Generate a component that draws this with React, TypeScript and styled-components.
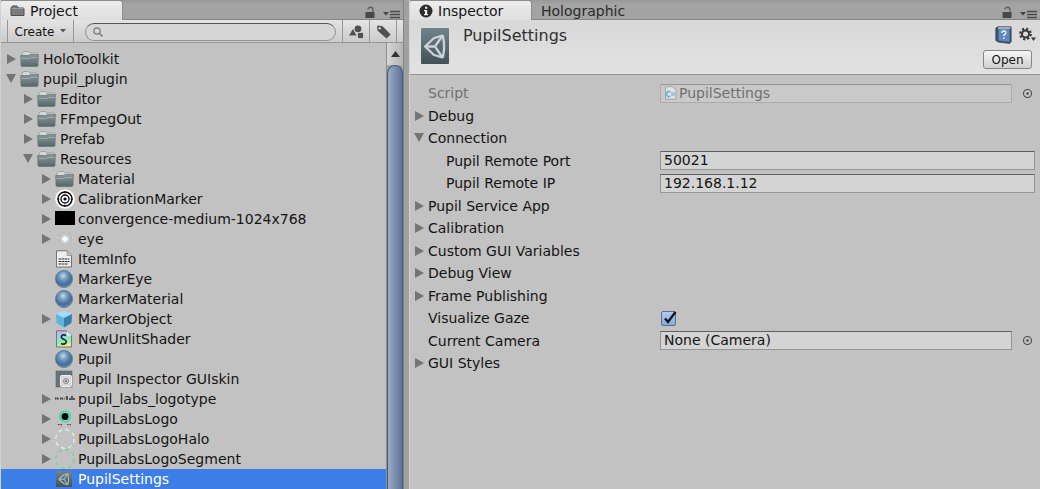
import React, { useId, useState } from "react";
import styled, { createGlobalStyle, css } from "styled-components";

const GlobalStyle = createGlobalStyle`
  *, *::before, *::after { box-sizing: border-box; }
  body {
    margin: 0;
    background: #c2c2c2;
    color: #141414;
    font-family: "DejaVu Sans", Verdana, sans-serif;
    font-size: 14px;
    line-height: 20px;
  }
  button, input { font: inherit; color: inherit; }
  svg { display: block; flex: none; }
`;

/* ---------- window frame ---------- */

const Editor = styled.main`
  display: flex;
  min-height: 100vh;
  background: #a0a0a0;
`;

const ProjectPanel = styled.section`
  flex: 0 0 404px;
  display: flex;
  flex-direction: column;
  background: #c2c2c2;
  border-left: 1px solid #d0d0d0;
  border-right: 1px solid #848484;
`;

const InspectorPanel = styled.section`
  flex: 1;
  min-width: 0;
  margin-left: 5px;
  display: flex;
  flex-direction: column;
  background: #c2c2c2;
  border-left: 1px solid #d4d4d4;
`;

const TabBar = styled.div`
  display: flex;
  height: 20px;
  padding-right: 3px;
  background: linear-gradient(#989898, #a4a4a4 4px, #a2a2a2);
  border-bottom: 1px solid #868686;
`;

const Tab = styled.button<{ $active?: boolean; $width: number }>`
  display: flex;
  align-items: center;
  gap: 5px;
  width: ${(p) => p.$width}px;
  height: 20px;
  padding: 0 0 0 9px;
  border: 0;
  border-top: 1px solid transparent;
  background: none;
  color: #2a2a2a;
  text-align: left;
  white-space: nowrap;
  ${(p) =>
    p.$active &&
    css`
      color: #141414;
      background: linear-gradient(#ededed, #dedede);
      border-top-color: #8c8c8c;
      border-right: 1px solid #8c8c8c;
      border-radius: 2px 3px 0 0;
    `}
`;

const TabTools = styled.div`
  display: flex;
  gap: 8px;
  align-items: flex-end;
  margin-left: auto;
`;

const PlainButton = styled.button`
  display: flex;
  padding: 0;
  border: 0;
  background: none;
`;

/* ---------- project panel ---------- */

const Toolbar = styled.div`
  display: flex;
  align-items: stretch;
  height: 23px;
  padding: 0 6px;
  background: linear-gradient(#e4e4e4, #cbcbcb);
  border-bottom: 1px solid #979797;
`;

const ToolButton = styled.button<{ $width: number }>`
  display: flex;
  align-items: center;
  justify-content: center;
  gap: 6px;
  width: ${(p) => p.$width}px;
  padding: 2px 0 0;
  border: 0;
  border-right: 1px solid #979797;
  background: none;
  font-size: 12px;
  &:first-of-type { border-left: 1px solid #979797; }
`;

const Search = styled.label`
  flex: 1;
  display: flex;
  align-items: center;
  gap: 4px;
  min-width: 0;
  height: 18px;
  margin: 3px 6px 1px 11px;
  padding: 0 7px;
  background: #d6d6d6;
  border: 1px solid #959595;
  border-top-color: #555;
  border-radius: 9px;
`;

const SearchInput = styled.input`
  flex: 1;
  min-width: 0;
  height: 14px;
  padding: 0;
  border: 0;
  outline: 0;
  background: none;
  font-size: 12px;
`;

const FilterGroup = styled.div`
  display: flex;
`;

const ProjectBody = styled.div`
  flex: 1;
  display: flex;
`;

const Tree = styled.ul`
  flex: 1;
  min-width: 0;
  margin: 0;
  padding: 6px 0 0;
  list-style: none;
`;

const INDENTS = [5, 22, 40];

const TreeRow = styled.li<{ $depth: number; $selected?: boolean }>`
  display: flex;
  align-items: center;
  height: 20px;
  padding-left: ${(p) => INDENTS[p.$depth]}px;
  white-space: nowrap;
  ${(p) => p.$selected && css`background: #3d7de6; color: #fff;`}
`;

const ArrowSlot = styled.span`
  flex: 0 0 14px;
`;

const IconSlot = styled.span`
  flex: 0 0 20px;
  display: flex;
  margin-right: 3px;
`;

const ScrollBar = styled.div`
  flex: 0 0 17px;
  display: flex;
  flex-direction: column;
  background: #a6a6a6;
  border-left: 1px solid #909090;
`;

const ScrollArrow = styled.button`
  display: flex;
  align-items: center;
  justify-content: center;
  height: 22px;
  padding: 0;
  border: 0;
  background: linear-gradient(90deg, #d6d6d6, #b4b4b4);
`;

const ScrollThumb = styled.div`
  flex: 1;
  background: linear-gradient(90deg, #9aabc6, #5f7499);
  border: 1px solid #475a7c;
  border-bottom: 0;
  border-radius: 8px 8px 0 0;
`;

/* ---------- inspector panel ---------- */

const AssetHeader = styled.header`
  display: flex;
  height: 55px;
  padding: 6px 4px 0 11px;
  background: linear-gradient(#d8d8d8, #e2e2e2);
  border-bottom: 1px solid #959595;
`;

const AssetIconFrame = styled.div`
  padding-top: 2px;
`;

const AssetTitle = styled.h1`
  flex: 1;
  margin: 0 0 0 14px;
  font-size: 16px;
  font-weight: 400;
  line-height: 20px;
  color: #303030;
`;

const HeaderActions = styled.div`
  display: flex;
  flex-direction: column;
  align-items: flex-end;
  gap: 6px;
`;

const ActionIcons = styled.div`
  display: flex;
  gap: 7px;
`;

const OpenButton = styled.button`
  width: 49px;
  height: 19px;
  margin-right: 4px;
  padding: 0;
  font-size: 12px;
  line-height: 16px;
  background: linear-gradient(#f6f6f6, #d0d0d0);
  border: 1px solid #858585;
  border-radius: 3px;
`;

const Properties = styled.form`
  padding: 7px 5px 8px 4px;
`;

const PropertyRow = styled.div`
  display: flex;
  align-items: center;
  height: 22px;
  &:nth-child(even) { height: 23px; }
`;

const Foldout = styled.button`
  display: flex;
  align-items: center;
  gap: 4px;
  padding: 0;
  border: 0;
  background: none;
  text-align: left;
  white-space: nowrap;
`;

const FieldLabel = styled.label<{ $nested?: boolean; $disabled?: boolean }>`
  flex: 0 0 246px;
  padding-left: ${(p) => (p.$nested ? 32 : 14)}px;
  white-space: nowrap;
  ${(p) => p.$disabled && css`color: #707070;`}
`;

const FieldBox = styled.div<{ $disabled?: boolean }>`
  flex: 1;
  display: flex;
  align-items: center;
  gap: 2px;
  min-width: 0;
  height: 19px;
  padding: 0 3px;
  background: ${(p) => (p.$disabled ? "#c9c9c9" : "#d4d4d4")};
  border: 1px solid ${(p) => (p.$disabled ? "#acacac" : "#969696")};
  border-top-color: ${(p) => (p.$disabled ? "#969696" : "#606060")};
`;

const FieldInput = styled.input`
  flex: 1;
  min-width: 0;
  height: 17px;
  padding: 0;
  border: 0;
  outline: 0;
  background: none;
  line-height: 17px;
  &:disabled { color: #707070; }
`;

const Picker = styled(PlainButton)`
  margin: 0 2px 0 10px;
`;

const TickBox = styled.span`
  display: grid;
  margin-left: 1px;
  > * { grid-area: 1 / 1; }
  svg { pointer-events: none; }
`;

const TickInput = styled.input`
  appearance: none;
  width: 15px;
  height: 15px;
  margin: 1px 0 0;
  background: linear-gradient(#b3cbee, #86aade);
  border: 1px solid #5d6f8c;
  border-radius: 2px;
  &:not(:checked) { background: #d8d8d8; }
  &:not(:checked) + svg { visibility: hidden; }
`;

/* ---------- icons ---------- */

const Triangle = ({ open }: { open?: boolean }) => (
  <svg width="10" height="12" viewBox="0 0 10 12" fill="#747474">
    {open ? <path d="M0 1h10L5 10z" /> : <path d="M1 1v10l9-5z" />}
  </svg>
);

const LockIcon = () => (
  <svg width="10" height="13" viewBox="0 0 10 13">
    <path d="M3 3.5c0-3 5-3 5 0V7" fill="none" stroke="#606060" strokeWidth="1.3" />
    <rect x="0.5" y="6" width="9" height="6" fill="#484848" />
  </svg>
);

const MenuIcon = () => (
  <svg width="17" height="10" viewBox="0 0 17 10">
    <path d="M0 3h6L3 6.500z" fill="#444" />
    <path d="M7 2.500h10M7 5.500h10M7 8.500h10" stroke="#4c4c4c" strokeWidth="1.300" />
  </svg>
);

const TabFolderIcon = () => (
  <svg width="15" height="12" viewBox="0 0 15 12">
    <path d="M1 10.500V3l1.500-2h4.500l1 2h5.500l.5 1v6.500z" fill="#7c7c7c" stroke="#4d4d4d" />
    <path d="M1.500 3.500h12" stroke="#9c9c9c" />
  </svg>
);

const InfoIcon = () => (
  <svg width="14" height="14" viewBox="0 0 14 14">
    <circle cx="7" cy="7" r="6.5" fill="#2c2c2c" />
    <path d="M6 2.8h2.2v2H6zM5 6h3.2v4H9v1.2H5V10h1V7.2H5z" fill="#eee" />
  </svg>
);

const SearchIcon = () => (
  <svg width="10" height="10" viewBox="0 0 10 10" fill="none" stroke="#7c7c7c">
    <circle cx="4" cy="4" r="3.2" strokeWidth="1.2" />
    <path d="M6.3 6.3 9.5 9.5" strokeWidth="1.6" />
  </svg>
);

const ShapesIcon = () => (
  <svg width="15" height="14" viewBox="0 0 15 14" fill="#505050">
    <circle cx="9" cy="3.8" r="3.4" />
    <path d="M0 10.500 4 4l3.500 6.500z" />
    <rect x="8.5" y="7.6" width="6" height="6" stroke="#d8d8d8" strokeWidth="0.8" />
  </svg>
);

const TagIcon = () => (
  <svg width="15" height="14" viewBox="0 0 15 14">
    <path
      fillRule="evenodd"
      d="M1 1.8 2 .6l4.600.600 8 8.200-4 4.200L1.600 5.800zM3.600 2a1.200 1.200 0 1 0 .1 2.400A1.200 1.200 0 0 0 3.600 2z"
      fill="#505050"
    />
  </svg>
);

const FolderIcon = () => (
  <svg width="19" height="18" viewBox="0 0 19 18">
    <defs>
      <linearGradient id="folder" x1="0" y1="0" x2="0" y2="1">
        <stop offset="0" stopColor="#8a9799" />
        <stop offset="0.5" stopColor="#738184" />
        <stop offset="1" stopColor="#566567" />
      </linearGradient>
    </defs>
    <path d="M1.500 6 2.500 2.500 4 1.500h4.500l1.500 1.500h7l1 1V7z" fill="#d4d8d8" stroke="#8c9292" strokeWidth="0.700" />
    <path d="M.7 5.500h8l1.500-1h8.100L18 15.500l-.8 1H1.700l-.7-1z" fill="url(#folder)" stroke="#66757a" strokeWidth="0.700" />
    <path d="M1.500 8.500h8l1.500-1h6.500" fill="none" stroke="#9fb8bc" strokeWidth="0.800" />
  </svg>
);

const TargetIcon = () => (
  <svg width="20" height="20" viewBox="0 0 20 20">
    <circle cx="10" cy="10" r="9.800" fill="#fff" />
    <circle cx="10" cy="10" r="7" fill="none" stroke="#000" strokeWidth="1.400" />
    <circle cx="10" cy="10" r="4" fill="none" stroke="#000" strokeWidth="1.300" />
    <circle cx="10" cy="10" r="1.600" fill="#000" />
    <path d="M10 2v2.500M10 15.500V18M2 10h2.500M15.500 10H18" stroke="#000" strokeWidth="0.800" />
  </svg>
);

const BlackTextureIcon = () => (
  <svg width="20" height="16" viewBox="0 0 20 16">
    <rect y="0" width="20" height="14" fill="#000" />
  </svg>
);

const EyeIcon = () => (
  <svg width="20" height="18" viewBox="0 0 20 18">
    <circle cx="10" cy="9" r="6" fill="#cacaca" stroke="#b2b2b2" strokeDasharray="3 2" />
    <circle cx="10" cy="9" r="3" fill="#e6e6e6" />
    <path d="M10 6.500v5M7.500 9h5" stroke="#fff" strokeWidth="2" />
    <path d="M1 7.500h2M1 11h1M17 7h2M18 11h1" stroke="#d6d6d6" />
  </svg>
);

const TextFileIcon = () => (
  <svg width="18" height="18" viewBox="0 0 18 18">
    <path d="M1.500.8h10.500l4.500 4.500V17h-15z" fill="#efefef" stroke="#727272" />
    <path d="M12 1v4.500h4.500" fill="#c4c4c4" stroke="#8c8c8c" strokeWidth="0.700" />
    <path d="M3.500 9h11M3.500 11.500h11M3.500 14h9" stroke="#2c2c2c" strokeWidth="1.200" strokeDasharray="3 .5 2 .5" />
  </svg>
);

const SphereIcon = () => (
  <svg width="18" height="18" viewBox="0 0 18 18">
    <defs>
      <radialGradient id="sphere" cx="0.45" cy="0.32" r="0.7">
        <stop offset="0" stopColor="#c4dcec" />
        <stop offset="0.35" stopColor="#7299bd" />
        <stop offset="0.72" stopColor="#426c97" />
        <stop offset="1" stopColor="#6595be" />
      </radialGradient>
    </defs>
    <circle cx="9" cy="9" r="8.500" fill="url(#sphere)" stroke="#4c6c8c" strokeWidth="0.700" />
  </svg>
);

const CubeIcon = () => (
  <svg width="18" height="18" viewBox="0 0 18 18">
    <path d="M9 .8 17 4 9 8 1 4z" fill="#a4dbf4" />
    <path d="M1 4 9 8v9.500L1.500 13z" fill="#5cb4e2" />
    <path d="M17 4 9 8v9.500L16.500 13z" fill="#347fae" />
  </svg>
);

const ShaderIcon = () => (
  <svg width="18" height="18" viewBox="0 0 18 18">
    <defs>
      <linearGradient id="shader" x1="0.2" y1="0" x2="0.5" y2="1">
        <stop offset="0" stopColor="#d8a2ee" />
        <stop offset="0.35" stopColor="#9ed2f2" />
        <stop offset="0.65" stopColor="#8cecb0" />
        <stop offset="1" stopColor="#f2ea92" />
      </linearGradient>
    </defs>
    <path d="M1.500.8h10.500l4.500 4.500V17h-15z" fill="url(#shader)" stroke="#6f7a76" />
    <path d="M12 1v4.500h4.500" fill="#e4f2f8" />
    <path
      d="M11 5.500C9.500 4.400 6.300 4.600 6.300 7c0 2.600 5 1.900 5 4.700 0 2.200-3 3-5.300 1.700"
      fill="none"
      stroke="#1c2c2c"
      strokeWidth="1.700"
    />
  </svg>
);

const SkinIcon = () => (
  <svg width="18" height="18" viewBox="0 0 18 18">
    <rect x="1" y="1" width="16" height="16" fill="#66737a" stroke="#58646a" strokeWidth="0.600" />
    <rect x="5.500" y="5.500" width="11" height="11" rx="1" fill="#d8d8d8" stroke="#efefef" />
    <circle cx="11" cy="11" r="2.500" fill="#cfcfcf" stroke="#8a8a8a" />
    <circle cx="11" cy="11" r="0.900" fill="#555" />
  </svg>
);

const LogotypeIcon = () => (
  <svg width="20" height="16" viewBox="0 0 20 16">
    <path d="M0 7.500h4M5 7.500h3" stroke="#333" strokeWidth="1.800" strokeDasharray="1.500 .5" />
    <path d="M9 9l1.500-3" stroke="#777" />
    <path d="M12 5v4M14 8h2M17 5v4M18 8h2" stroke="#333" strokeWidth="1.500" />
  </svg>
);

const PupilLogoIcon = () => (
  <svg width="20" height="20" viewBox="0 0 20 20">
    <circle cx="10" cy="7.500" r="5.200" fill="#b0dcca" stroke="#43d9a4" strokeWidth="1.800" />
    <circle cx="10" cy="7.500" r="3.500" fill="#000" />
    <path d="M3 15.500h5M12 15.500h5" stroke="#444" strokeDasharray="1.500 1" />
    <path d="M4 17h3M13 17h4" stroke="#999" strokeDasharray="1 1" />
  </svg>
);

const RingIcon = ({ color }: { color: string }) => (
  <svg width="20" height="20" viewBox="0 0 20 20">
    <circle cx="10" cy="10" r="9.300" fill="none" stroke={color} strokeWidth="1.200" strokeDasharray="4 3.300" />
  </svg>
);

const UnityMark = () => (
  <g fill="none" strokeLinejoin="round" strokeLinecap="round">
    <path d="M4 18.500 13 10l8.500-2.300M4 18.500 13 27l8.500 2.300" />
    <path d="M22 8.500 23 15v7l-1 6.500" />
    <path d="M5 18.500h9M14 18.500 20.500 9M14 18.500 20.500 28" />
  </g>
);

const AssetIcon = ({ large }: { large?: boolean }) => (
  <svg width={large ? 28 : 18} height={large ? 36 : 18} viewBox={large ? "0 0 28 36" : "-4 2 36 32"}>
    <defs>
      <linearGradient id={large ? "assetLarge" : "assetSmall"} x1="0" y1="0" x2="0" y2="1">
        <stop offset="0" stopColor="#71848b" />
        <stop offset="1" stopColor="#425158" />
      </linearGradient>
    </defs>
    {large ? (
      <rect width="28" height="36" rx="1" fill="url(#assetLarge)" />
    ) : (
      <rect x="-2" y="2" width="32" height="32" fill="url(#assetSmall)" />
    )}
    <g stroke={large ? "#c9d3d7" : "#a9bac2"} strokeWidth="2.300">
      <UnityMark />
    </g>
  </svg>
);

const ScriptIcon = () => (
  <svg width="13" height="14" viewBox="0 0 13 14">
    <path d="M1.500.7h7l3.500 3.500v9H1.500z" fill="#dce2e6" stroke="#9ea6aa" />
    <path d="M6.500 6A2.500 2.500 0 1 0 6.500 10" fill="none" stroke="#69b0d2" strokeWidth="1.500" />
    <path d="M8 6v4M10 6v4M7 7h4M7 9h4" stroke="#69b0d2" strokeWidth="0.600" />
  </svg>
);

const HelpIcon = () => (
  <svg width="17" height="18" viewBox="0 0 17 18">
    <path d="M.8 2 3 .8h13.200v15L14.500 17.500 3 16 .8 14.500z" fill="#3d506e" stroke="#33435e" strokeWidth="0.700" />
    <path d="M3 2h12.500" stroke="#e4e8ee" strokeWidth="1.200" />
    <path d="M3.500 3h11v13l-11-1.500z" fill="#6288bd" />
    <path d="M6.800 7c.2-3 4.600-2.500 4 0-.4 1.200-2 1.200-2 3M8.800 11.500V13" fill="none" stroke="#f2f6fc" strokeWidth="1.400" />
  </svg>
);

const GearIcon = () => (
  <svg width="17" height="18" viewBox="0 0 17 18">
    <circle cx="6.500" cy="8" r="5.300" fill="none" stroke="#383838" strokeWidth="2.200" strokeDasharray="2.160 2" />
    <circle cx="6.500" cy="8" r="3.500" fill="none" stroke="#383838" strokeWidth="2" />
    <path d="M12 11.500h5L14.500 15z" fill="#383838" />
  </svg>
);

const PickerIcon = () => (
  <svg width="11" height="11" viewBox="0 0 11 11">
    <circle cx="5.500" cy="5.500" r="4" fill="none" stroke="#4a4a4a" strokeWidth="1.100" />
    <circle cx="5.500" cy="5.500" r="1.200" fill="#4a4a4a" />
  </svg>
);

const CheckMark = () => (
  <svg width="17" height="16" viewBox="0 0 17 16">
    <path d="M4 8.500 7 12 14.500 2" fill="none" stroke="#0a0f18" strokeWidth="2.300" />
  </svg>
);

/* ---------- data ---------- */

type Asset = { name: string; depth: number; icon: React.ReactNode; fold?: "open" | "closed"; selected?: boolean };

const ASSETS: Asset[] = [
  { name: "HoloToolkit", depth: 0, icon: <FolderIcon />, fold: "closed" },
  { name: "pupil_plugin", depth: 0, icon: <FolderIcon />, fold: "open" },
  { name: "Editor", depth: 1, icon: <FolderIcon />, fold: "closed" },
  { name: "FFmpegOut", depth: 1, icon: <FolderIcon />, fold: "closed" },
  { name: "Prefab", depth: 1, icon: <FolderIcon />, fold: "closed" },
  { name: "Resources", depth: 1, icon: <FolderIcon />, fold: "open" },
  { name: "Material", depth: 2, icon: <FolderIcon />, fold: "closed" },
  { name: "CalibrationMarker", depth: 2, icon: <TargetIcon />, fold: "closed" },
  { name: "convergence-medium-1024x768", depth: 2, icon: <BlackTextureIcon />, fold: "closed" },
  { name: "eye", depth: 2, icon: <EyeIcon />, fold: "closed" },
  { name: "ItemInfo", depth: 2, icon: <TextFileIcon /> },
  { name: "MarkerEye", depth: 2, icon: <SphereIcon /> },
  { name: "MarkerMaterial", depth: 2, icon: <SphereIcon /> },
  { name: "MarkerObject", depth: 2, icon: <CubeIcon />, fold: "closed" },
  { name: "NewUnlitShader", depth: 2, icon: <ShaderIcon /> },
  { name: "Pupil", depth: 2, icon: <SphereIcon /> },
  { name: "Pupil Inspector GUIskin", depth: 2, icon: <SkinIcon /> },
  { name: "pupil_labs_logotype", depth: 2, icon: <LogotypeIcon />, fold: "closed" },
  { name: "PupilLabsLogo", depth: 2, icon: <PupilLogoIcon />, fold: "closed" },
  { name: "PupilLabsLogoHalo", depth: 2, icon: <RingIcon color="#e6f0ec" />, fold: "closed" },
  { name: "PupilLabsLogoSegment", depth: 2, icon: <RingIcon color="#62d8a6" />, fold: "closed" },
  { name: "PupilSettings", depth: 2, icon: <AssetIcon />, selected: true },
];

/* ---------- pieces ---------- */

const WindowTools = () => (
  <TabTools>
    <PlainButton aria-label="Lock"><LockIcon /></PlainButton>
    <PlainButton aria-label="Panel menu"><MenuIcon /></PlainButton>
  </TabTools>
);

const Section = ({ title, open }: { title: string; open?: boolean }) => (
  <PropertyRow>
    <Foldout type="button" aria-expanded={!!open}>
      <Triangle open={open} />
      {title}
    </Foldout>
  </PropertyRow>
);

type FieldProps = {
  label: string;
  value: string;
  nested?: boolean;
  disabled?: boolean;
  picker?: boolean;
  icon?: React.ReactNode;
};

const Field = ({ label, value, nested, disabled, picker, icon }: FieldProps) => {
  const id = useId();
  return (
    <PropertyRow>
      <FieldLabel htmlFor={id} $nested={nested} $disabled={disabled}>{label}</FieldLabel>
      <FieldBox $disabled={disabled}>
        {icon}
        <FieldInput id={id} defaultValue={value} disabled={disabled} readOnly={picker} />
      </FieldBox>
      {picker && (
        <Picker type="button" aria-label={`Select ${label}`} disabled={disabled}>
          <PickerIcon />
        </Picker>
      )}
    </PropertyRow>
  );
};

const Toggle = ({ label }: { label: string }) => {
  const id = useId();
  const [on, setOn] = useState(true);
  return (
    <PropertyRow>
      <FieldLabel htmlFor={id}>{label}</FieldLabel>
      <TickBox>
        <TickInput id={id} type="checkbox" checked={on} onChange={(e) => setOn(e.target.checked)} />
        <CheckMark />
      </TickBox>
    </PropertyRow>
  );
};

export default function App() {
  return (
    <>
      <GlobalStyle />
      <Editor>
        <ProjectPanel aria-label="Project">
          <TabBar>
            <Tab $active $width={122}><TabFolderIcon />Project</Tab>
            <WindowTools />
          </TabBar>
          <Toolbar>
            <ToolButton $width={67}>
              Create
              <svg width="6" height="8" viewBox="0 0 6 8"><path d="M0 1h6L3 4.500z" fill="#555" /></svg>
            </ToolButton>
            <Search>
              <SearchIcon />
              <SearchInput type="text" aria-label="Search assets" />
            </Search>
            <FilterGroup>
              <ToolButton $width={28} aria-label="Filter by type"><ShapesIcon /></ToolButton>
              <ToolButton $width={27} aria-label="Filter by label"><TagIcon /></ToolButton>
            </FilterGroup>
          </Toolbar>
          <ProjectBody>
            <Tree>
              {ASSETS.map((a) => (
                <TreeRow key={a.name} $depth={a.depth} $selected={a.selected}>
                  <ArrowSlot>
                    {a.fold && (
                      <PlainButton aria-label={`Toggle ${a.name}`} aria-expanded={a.fold === "open"}>
                        <Triangle open={a.fold === "open"} />
                      </PlainButton>
                    )}
                  </ArrowSlot>
                  <IconSlot>{a.icon}</IconSlot>
                  {a.name}
                </TreeRow>
              ))}
            </Tree>
            <ScrollBar>
              <ScrollArrow aria-label="Scroll up">
                <svg width="9" height="6" viewBox="0 0 9 6"><path d="M0 6 4.500 0 9 6z" fill="#333" /></svg>
              </ScrollArrow>
              <ScrollThumb />
            </ScrollBar>
          </ProjectBody>
        </ProjectPanel>

        <InspectorPanel aria-label="Inspector">
          <TabBar>
            <Tab $active $width={122}><InfoIcon />Inspector</Tab>
            <Tab $width={110}>Holographic</Tab>
            <WindowTools />
          </TabBar>
          <AssetHeader>
            <AssetIconFrame><AssetIcon large /></AssetIconFrame>
            <AssetTitle>PupilSettings</AssetTitle>
            <HeaderActions>
              <ActionIcons>
                <PlainButton aria-label="Help"><HelpIcon /></PlainButton>
                <PlainButton aria-label="Settings"><GearIcon /></PlainButton>
              </ActionIcons>
              <OpenButton>Open</OpenButton>
            </HeaderActions>
          </AssetHeader>
          <Properties>
            <Field label="Script" value="PupilSettings" disabled picker icon={<ScriptIcon />} />
            <Section title="Debug" />
            <Section title="Connection" open />
            <Field label="Pupil Remote Port" value="50021" nested />
            <Field label="Pupil Remote IP" value="192.168.1.12" nested />
            <Section title="Pupil Service App" />
            <Section title="Calibration" />
            <Section title="Custom GUI Variables" />
            <Section title="Debug View" />
            <Section title="Frame Publishing" />
            <Toggle label="Visualize Gaze" />
            <Field label="Current Camera" value="None (Camera)" picker />
            <Section title="GUI Styles" />
          </Properties>
        </InspectorPanel>
      </Editor>
    </>
  );
}
